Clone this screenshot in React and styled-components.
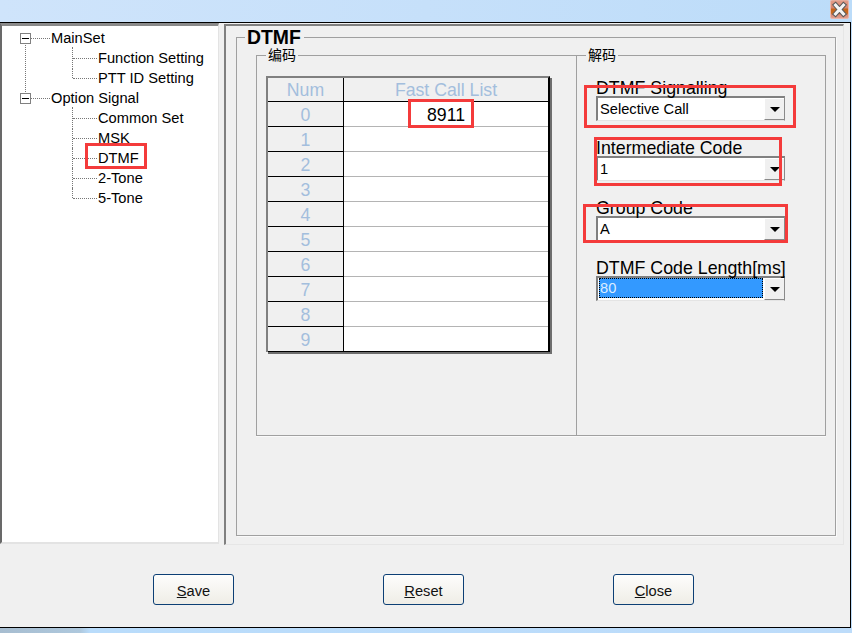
import React from "react";
import styled, { createGlobalStyle } from "styled-components";

const Global = createGlobalStyle`
  html, body { margin: 0; padding: 0; background: #bfdefa; }
  * { box-sizing: border-box; }
`;
const Page = styled.div`
  position: relative; width: 852px; height: 633px; overflow: hidden;
  display: flex; flex-direction: column;
  font-family: "Liberation Sans", Arial, sans-serif; color: #000;
  background: #bddcfa;
`;
const TitleBar = styled.div`
  height: 22px; flex: none; display: flex; justify-content: flex-end; align-items: flex-start; padding-right: 3px;
  background: linear-gradient(90deg, #cfe4fb 0%, #c6e0fa 50%, #bcdcf9 100%);
`;
const Window = styled.div`
  height: 606px; flex: none; width: 851px; display: flex; flex-direction: column;
  background: #f0f0f0; border-top: 1px solid #000; border-right: 1px solid #000; border-bottom: 1px solid #000;
`;
const Body = styled.div`
  height: 521px; flex: none; display: flex; gap: 5px;
`;
const Tree = styled.div`
  width: 219px; height: 521px; flex: none; background: #fff; padding-top: 2px;
  border-top: 3px solid #8a8a8a; border-left: 2px solid #696969;
  border-right: 1px solid #e3e3e3; border-bottom: 2px solid #e3e3e3;
`;
const Node = styled.div`
  position: relative;
  &::before {
    content: ""; position: absolute; left: 23px; top: 15px; bottom: -4px;
    border-left: 1px dotted #777; display: ${(p) => (p.$line ? "block" : "none")};
  }
`;
const RootRow = styled.div`
  height: 20px; display: flex; align-items: center; padding-left: 18px; font-size: 14.67px;
`;
const Expander = styled.span`
  position: relative; width: 11px; height: 11px; flex: none; border: 1px solid #808080; background: #fff; z-index: 1;
  &::after { content: ""; position: absolute; left: 1px; right: 1px; top: 4px; height: 1px; background: #000; }
`;
const HDots = styled.span`
  flex: none; width: ${(p) => p.$w}px; height: 1px; border-top: 1px dotted #777; margin-right: 1px;
`;
const ChildRow = styled.div`
  position: relative; height: 20px; display: flex; align-items: center; padding-left: 71px; font-size: 14.67px;
  &::before {
    content: ""; position: absolute; left: 70px; top: ${(p) => (p.$first ? "-1px" : "0")};
    height: ${(p) => (p.$last ? "10px" : "20px")}; border-left: 1px dotted #777;
  }
`;
const Panel = styled.div`
  width: 620px; height: 521px; flex: none; padding: 11px 0 0 10px; margin-top: 1px;
  border-top: 2px solid #808080; border-left: 2px solid #808080;
  border-right: 1px solid #e6e6e6; border-bottom: 1px solid #e6e6e6;
`;
const OuterGroup = styled.div`
  position: relative; width: 600px; height: 499px; padding: 17px 0 0 19px;
  border: 1px solid #a0a0a0; box-shadow: 1px 1px 0 #fafafa;
`;
const OuterLegend = styled.span`
  position: absolute; left: 8px; top: -11px; padding: 0 3px 0 2px; line-height: 20px;
  font-size: 19.4px; font-weight: 700; background: #f0f0f0;
`;
const GroupRow = styled.div`
  display: flex; width: 570px; height: 381px;
`;
const InnerGroup = styled.div`
  position: relative; height: 381px; width: ${(p) => p.$w}px; flex: none;
  border: 1px solid #a0a0a0; border-left-width: ${(p) => (p.$noLeft ? "0" : "1px")};
  padding: ${(p) => p.$pad};
  box-shadow: 0 1px 0 #fafafa;
`;
const InnerLegend = styled.span`
  position: absolute; left: ${(p) => p.$x}px; top: -9px; padding: 0 2px; line-height: 17px;
  font-family: "Liberation Sans", "Noto Sans CJK SC", sans-serif; font-size: 14px; background: #f0f0f0;
`;
const Table = styled.div`
  width: 284px; height: 276px; display: grid; grid-template-columns: 76px 1fr;
  grid-template-rows: 24px repeat(10, 25px);
  border-top: 2px solid #808080; border-left: 2px solid #808080; border-right: 2px solid #000;
  box-shadow: 2px 2px 0 #6e6e6e;
  background: #fff;
`;
const HeadCell = styled.div`
  display: flex; align-items: center; justify-content: center; background: #f0f0f0; color: #a3bedd; font-size: 17.7px; padding-top: 2px;
  border-bottom: 1px solid #000; border-right: ${(p) => (p.$num ? "1px solid #000" : "0")};
`;
const NumCell = styled.div`
  display: flex; align-items: center; justify-content: center; background: #f0f0f0; color: #a3bedd; font-size: 17.7px; padding-top: 2px;
  border-bottom: 1px solid #000; border-right: 1px solid #000;
`;
const DataCell = styled.div`
  display: flex; align-items: center; justify-content: center; font-size: 17.7px; background: #fff; padding-top: 2px;
  border-bottom: 1px solid ${(p) => (p.$last ? "#000" : "#b4b4b4")};
`;
const Field = styled.div`
  height: 60px; width: 195px;
`;
const FieldLabel = styled.div`
  height: 18px; line-height: 20px; font-size: 17.8px; white-space: nowrap;
`;
const Combo = styled.div`
  display: flex; width: 189px; height: 25px; background: #fff;
  border-top: 2px solid #808080; border-left: 2px solid #808080;
  border-right: 1px solid #8a8a8a; border-bottom: 1px solid #e4e4e4;
`;
const ComboValue = styled.div`
  flex: 1; display: flex; align-items: center; font-size: 14.67px; padding-left: 2px;
  ${(p) => p.$sel && `
    background: #3399ff; color: #dcecff; border: 1px dotted #000; margin: 0 1px 2px 1px; padding-left: 0;
  `}
`;
const ComboButton = styled.div`
  width: 20px; flex: none; display: flex; align-items: center; justify-content: center;
  background: #f0f0f0; border-left: 1px solid #fff; border-top: 1px solid #fff; border-bottom: 1px solid #8a8a8a;
`;
const Arrow = styled.span`
  width: 0; height: 0; border-left: 5px solid transparent; border-right: 5px solid transparent; border-top: 5px solid #000;
`;
const Footer = styled.div`
  flex: 1; display: flex; align-items: flex-start; gap: 149px; padding: 30px 0 0 153px;
`;
const Button = styled.div`
  width: 81px; height: 31px; display: flex; align-items: center; justify-content: center; font-size: 14.67px; padding-top: 2px;
  border: 1px solid #0c3f75; border-radius: 3px;
  background: linear-gradient(180deg, #fdfdfc 0%, #f6f5f1 50%, #efede6 100%);
  color: #111;
`;
const Strip = styled.div`
  flex: 1; background: linear-gradient(90deg, #a7bdd0 0, #aec8dd 80px, #b9dcfb 90px, #bddcfa 100%);
`;
const Mark = styled.div`
  position: absolute; left: ${(p) => p.$x}px; top: ${(p) => p.$y}px; width: ${(p) => p.$w}px; height: ${(p) => p.$h}px;
  border: 3px solid #f43b3b; pointer-events: none;
`;

const CloseIcon = () => (
  <svg width="19" height="19" viewBox="0 0 19 19">
    <defs>
      <linearGradient id="cl" x1="0" y1="0" x2="0" y2="1">
        <stop offset="0" stopColor="#e3a08e" />
        <stop offset="0.42" stopColor="#d9826a" />
        <stop offset="0.5" stopColor="#c4651c" />
        <stop offset="0.72" stopColor="#c8691f" />
        <stop offset="0.8" stopColor="#d98a78" />
        <stop offset="1" stopColor="#e3a292" />
      </linearGradient>
    </defs>
    <rect x="0.5" y="0" width="18" height="18.5" rx="1.5" fill="url(#cl)" stroke="#e9b7aa" />
    <path d="M5.5 5 L13.5 14 M13.5 5 L5.5 14" stroke="#5a5a5a" strokeWidth="5" strokeLinecap="square" />
    <path d="M5.5 5 L13.5 14 M13.5 5 L5.5 14" stroke="#f4f4f4" strokeWidth="3" strokeLinecap="square" />
  </svg>
);

const Child = ({ label, first, last }) => (
  <ChildRow $first={first} $last={last}>
    <HDots $w={24} />
    {label}
  </ChildRow>
);

const ComboField = ({ label, value, sel }) => (
  <Field>
    <FieldLabel>{label}</FieldLabel>
    <Combo>
      <ComboValue $sel={sel}>{value}</ComboValue>
      <ComboButton><Arrow /></ComboButton>
    </Combo>
  </Field>
);

const nums = [0, 1, 2, 3, 4, 5, 6, 7, 8, 9];

export default function App() {
  return (
    <Page>
      <Global />
      <TitleBar><CloseIcon /></TitleBar>
      <Window>
        <Body>
          <Tree>
            <Node $line>
              <RootRow><Expander /><HDots $w={19} />MainSet</RootRow>
              <Child label="Function Setting" first />
              <Child label="PTT ID Setting" last />
            </Node>
            <Node>
              <RootRow><Expander /><HDots $w={19} />Option Signal</RootRow>
              <Child label="Common Set" first />
              <Child label="MSK" />
              <Child label="DTMF" />
              <Child label="2-Tone" />
              <Child label="5-Tone" last />
            </Node>
          </Tree>
          <Panel>
            <OuterGroup>
              <OuterLegend>DTMF</OuterLegend>
              <GroupRow>
                <InnerGroup $w={321} $pad="20px 0 0 9px">
                  <InnerLegend $x={9}>编码</InnerLegend>
                  <Table>
                    <HeadCell $num>Num</HeadCell>
                    <HeadCell>Fast Call List</HeadCell>
                    {nums.map((n) => (
                      <React.Fragment key={n}>
                        <NumCell>{n}</NumCell>
                        <DataCell $last={n === 9}>{n === 0 ? "8911" : ""}</DataCell>
                      </React.Fragment>
                    ))}
                  </Table>
                </InnerGroup>
                <InnerGroup $w={249} $noLeft $pad="22px 0 0 19px">
                  <InnerLegend $x={9}>解码</InnerLegend>
                  <ComboField label="DTMF Signalling" value="Selective Call" />
                  <ComboField label="Intermediate Code" value="1" />
                  <ComboField label="Group Code" value="A" />
                  <ComboField label="DTMF Code Length[ms]" value="80" sel />
                </InnerGroup>
              </GroupRow>
            </OuterGroup>
          </Panel>
        </Body>
        <Footer>
          <Button><span><u>S</u>ave</span></Button>
          <Button><span><u>R</u>eset</span></Button>
          <Button><span><u>C</u>lose</span></Button>
        </Footer>
      </Window>
      <Strip />
      <Mark $x={85} $y={143} $w={62} $h={26} />
      <Mark $x={408} $y={99} $w={66} $h={29} />
      <Mark $x={584} $y={85} $w={212} $h={43} />
      <Mark $x={594} $y={137} $w={188} $h={49} />
      <Mark $x={583} $y={204} $w={205} $h={39} />
    </Page>
  );
}
